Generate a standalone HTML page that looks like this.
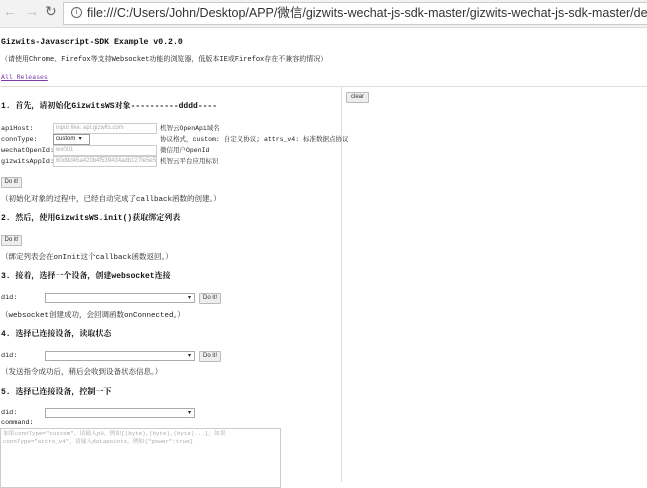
<!DOCTYPE html>
<html><head><meta charset="utf-8"><style>
body{margin:0;width:647px;height:482px;overflow:hidden;background:#fff;position:relative;font-family:"Liberation Mono","Noto Serif CJK SC",monospace;font-size:7.5px;color:#222}
.a{position:absolute;white-space:nowrap;line-height:10px}
.b{font-weight:bold;font-size:8px;color:#111}
.in{position:absolute;height:9px;border:1px solid #ccc;background:#fff;font-family:"Liberation Sans",sans-serif;font-size:6px;color:#aaa;line-height:9px;padding-left:2px;box-sizing:content-box;overflow:hidden;white-space:nowrap}
.btn{position:absolute;height:9px;border:1px solid #bbb;background:#eee;font-family:"Liberation Sans",sans-serif;font-size:6px;line-height:9px;text-align:center;color:#333;border-radius:1px}
.sel{position:absolute;height:8px;border:1px solid #aaa;background:#fff;font-size:6px;line-height:8px;text-align:right;padding-right:3px;box-sizing:content-box}
.l{font-size:6.8px}
</style></head><body>
<div style="position:absolute;left:0;top:0;width:647px;height:27px;background:#f2f2f2;border-bottom:1px solid #ddd"></div>
<div class="a" style="left:3px;top:6px;font-family:'Liberation Sans';font-size:14px;color:#bbb">&#8592;</div>
<div class="a" style="left:25px;top:6px;font-family:'Liberation Sans';font-size:14px;color:#bbb">&#8594;</div>
<div class="a" style="left:45px;top:6px;font-family:'Liberation Sans';font-size:14px;color:#666">&#8635;</div>
<div style="position:absolute;left:63px;top:2px;width:600px;height:21px;background:#fff;border:1px solid #ccc"></div>
<div style="position:absolute;left:71px;top:7px;width:9px;height:9px;border:1px solid #666;border-radius:50%;font-size:7px;line-height:9px;text-align:center;font-family:'Liberation Sans';color:#555">i</div>
<div class="a" style="left:87px;top:5px;width:560px;overflow:hidden;font-family:'Liberation Sans','Noto Sans CJK SC',sans-serif;font-size:12.5px;line-height:16px;color:#333">file:///C:/Users/John/Desktop/APP/微信/gizwits-wechat-js-sdk-master/gizwits-wechat-js-sdk-master/demo/index</div>
<div class="a b" style="left:1px;top:38px;font-size:8.2px">Gizwits-Javascript-SDK Example v0.2.0</div>
<div class="a" style="left:1px;top:55px;font-size:7px">（请使用Chrome、Firefox等支持Websocket功能的浏览器，低版本IE或Firefox存在不兼容的情况）</div>
<div class="a" style="left:1px;top:73px;color:#7a3aa8;text-decoration:underline;font-size:6.5px">All Releases</div>
<div style="position:absolute;left:0;top:86px;width:647px;height:1px;background:#ddd"></div>
<div style="position:absolute;left:341px;top:87px;width:1px;height:395px;background:#ddd"></div>
<div class="btn" style="left:346px;top:92px;width:21px">clear</div>
<div class="a b" style="left:1px;top:102px">1. 首先，请初始化GizwitsWS对象----------dddd----</div>
<div class="a l" style="left:1px;top:124px">apiHost:</div><div class="in" style="left:53px;top:123px;width:100px">input like: api.gizwits.com</div><div class="a" style="left:160px;top:124px;font-size:6.5px">机智云OpenApi域名</div>
<div class="a l" style="left:1px;top:135px">connType:</div><div class="in" style="left:53px;top:134px;width:33px;color:#222;border-color:#999">custom &nbsp;▾</div><div class="a" style="left:160px;top:135px;font-size:6.5px">协议格式，custom: 自定义协议; attrs_v4: 标准数据点协议</div>
<div class="a l" style="left:1px;top:146px">wechatOpenId:</div><div class="in" style="left:53px;top:145px;width:100px">wx001</div><div class="a" style="left:160px;top:146px;font-size:6.5px">微信用户OpenId</div>
<div class="a l" style="left:1px;top:157px">gizwitsAppId:</div><div class="in" style="left:53px;top:156px;width:100px">60d9d45a420b4f539434adb127fe5e5e</div><div class="a" style="left:160px;top:157px;font-size:6.5px">机智云平台应用标识</div>
<div class="btn" style="left:1px;top:177px;width:19px">Do it!</div>
<div class="a" style="left:1px;top:195px">（初始化对象的过程中，已经自动完成了callback函数的创建。）</div>
<div class="a b" style="left:1px;top:214px">2. 然后，使用GizwitsWS.init()获取绑定列表</div>
<div class="btn" style="left:1px;top:235px;width:19px">Do it!</div>
<div class="a" style="left:1px;top:253px">（绑定列表会在onInit这个callback函数返回。）</div>
<div class="a b" style="left:1px;top:272px">3. 接着，选择一个设备，创建websocket连接</div>
<div class="a l" style="left:1px;top:293px">did:</div><div class="sel" style="left:45px;top:293px;width:145px">▾</div><div class="btn" style="left:199px;top:293px;width:20px">Do it!</div>
<div class="a" style="left:1px;top:311px">（websocket创建成功，会回调函数onConnected。）</div>
<div class="a b" style="left:1px;top:330px">4. 选择已连接设备，读取状态</div>
<div class="a l" style="left:1px;top:351px">did:</div><div class="sel" style="left:45px;top:351px;width:145px">▾</div><div class="btn" style="left:199px;top:351px;width:20px">Do it!</div>
<div class="a" style="left:1px;top:368px">（发送指令成功后，稍后会收到设备状态信息。）</div>
<div class="a b" style="left:1px;top:388px">5. 选择已连接设备，控制一下</div>
<div class="a l" style="left:1px;top:408px">did:</div><div class="sel" style="left:45px;top:408px;width:145px">▾</div>
<div class="a l" style="left:1px;top:418px">command:</div>
<div style="position:absolute;left:0;top:428px;width:281px;height:60px;border:1px solid #ccc;font-size:5.8px;color:#aaa;line-height:8px;padding:1px 2px;box-sizing:border-box">加果connType="custom"，请输入p0，例如[(byte),(byte),(byte)...]；如果connType="attrs_v4"，请输入datapoints，例如{"power":true}</div>
</body></html>
